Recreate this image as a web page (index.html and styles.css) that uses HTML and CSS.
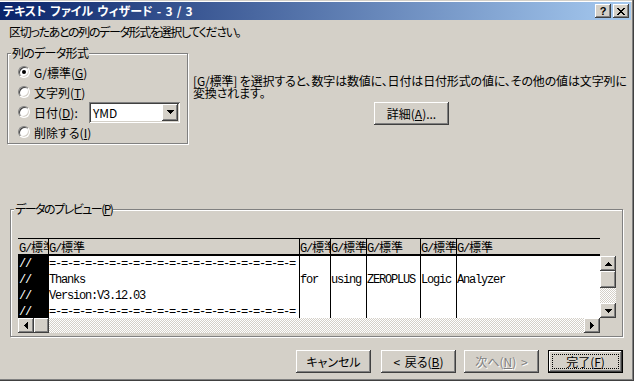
FILE: index.html
```
<!DOCTYPE html>
<html lang="ja">
<head>
<meta charset="utf-8">
<title>テキスト ファイル ウィザード - 3 / 3</title>
<link rel="stylesheet" href="styles.css">
</head>
<body>
<div class="window">
  <div class="titlebar">
    <span class="title">テキスト ファイル ウィザード - 3 / 3</span>
    <div class="tbtns">
      <span class="tbtn help">?</span>
      <span class="tbtn"><svg width="8" height="7" viewBox="0 0 8 7" shape-rendering="crispEdges"><path d="M0 0h2v1H0z M6 0h2v1H6z M1 1h2v1H1z M5 1h2v1H5z M2 2h4v1H2z M3 3h2v1H3z M2 4h4v1H2z M1 5h2v1H1z M5 5h2v1H5z M0 6h2v1H0z M6 6h2v1H6z"/></svg></span>
    </div>
  </div>
  <div class="body">
    <p class="intro">区切ったあとの列のデータ形式を選択してください。</p>
    <div class="top">
      <div class="group fmt">
        <span class="legend lg1">列のデータ形式</span>
        <div class="radios">
          <div class="radio"><span class="rb on"></span><span>G/標準(<u>G</u>)</span></div>
          <div class="radio"><span class="rb"></span><span>文字列(<u>T</u>)</span></div>
          <div class="radio"><span class="rb"></span><span class="dlbl">日付(<u>D</u>):</span><span class="combo"><span class="cval">YMD</span><span class="cbtn"><svg width="7" height="4" viewBox="0 0 7 4" shape-rendering="crispEdges"><path d="M0 0h7v1H6v1H5v1H4v1H3V3H2V2H1V1H0z"/></svg></span></span></div>
          <div class="radio"><span class="rb"></span><span>削除する(<u>I</u>)</span></div>
        </div>
      </div>
      <div class="desc">
        <p>[G/標準] を選択すると、数字は数値に、日付は日付形式の値に、その他の値は文字列に<br>変換されます。</p>
        <button class="btn detail">詳細(<u>A</u>)...</button>
      </div>
    </div>
    <div class="group preview">
      <span class="legend lg2">データのプレビュー(<u>P</u>)</span>
      <div class="grid">
        <div class="head cols mono">
          <div class="hc">G/<span class="k">標準</span></div>
          <div class="hc">G/<span class="k">標準</span></div>
          <div class="hc">G/<span class="k">標準</span></div>
          <div class="hc">G/<span class="k">標準</span></div>
          <div class="hc">G/<span class="k">標準</span></div>
          <div class="hc">G/<span class="k">標準</span></div>
          <div class="hc">G/<span class="k">標準</span></div>
        </div>
        <div class="hblank"></div>
        <div class="data cols mono">
          <div class="dc sel">//
//
//
//</div>
          <div class="dc">=-=-=-=-=-=-=-=-=-=-=-=-=-=-=-=-=-=-=-=-=
Thanks
Version:V3.12.03
=-=-=-=-=-=-=-=-=-=-=-=-=-=-=-=-=-=-=-=-=</div>
          <div class="dc">
for</div>
          <div class="dc">
using</div>
          <div class="dc">
ZEROPLUS</div>
          <div class="dc">
Logic</div>
          <div class="dc">
Analyzer</div>
        </div>
        <div class="vscroll">
          <span class="sbtn"><svg width="7" height="4" viewBox="0 0 7 4" shape-rendering="crispEdges"><path d="M3 0h1v1h1v1h1v1h1v1H0V3h1V2h1V1h1z"/></svg></span>
          <span class="thumb vthumb"></span>
          <span class="track"></span>
          <span class="sbtn"><svg width="7" height="4" viewBox="0 0 7 4" shape-rendering="crispEdges"><path d="M0 0h7v1H6v1H5v1H4v1H3V3H2V2H1V1H0z"/></svg></span>
        </div>
        <div class="hscroll">
          <span class="sbtn"><svg width="4" height="7" viewBox="0 0 4 7" shape-rendering="crispEdges"><path d="M3 0h1v7H3V6H2V5H1V4H0V3h1V2h1V1h1z"/></svg></span>
          <span class="thumb hthumb"></span>
          <span class="track"></span>
          <span class="sbtn"><svg width="4" height="7" viewBox="0 0 4 7" shape-rendering="crispEdges"><path d="M0 0h1v1h1v1h1v1h1v1H3v1H2v1H1v1H0z"/></svg></span>
        </div>
        <div class="corner"></div>
      </div>
    </div>
    <div class="buttons">
      <button class="btn cancel">キャンセル</button>
      <button class="btn back">&lt; 戻る(<u>B</u>)</button>
      <button class="btn next" disabled>次へ(<u>N</u>) &gt;</button>
      <button class="btn finish">完了(<u>F</u>)</button>
    </div>
  </div>
</div>
</body>
</html>
```

FILE: styles.css
```
* { box-sizing: border-box; }
html, body { margin: 0; padding: 0; }
body {
  width: 634px; height: 381px; overflow: hidden;
  background: #d4d0c8;
  font-family: "Noto Sans CJK JP", "Noto Sans CJK SC", sans-serif;
  font-size: 12px; color: #000;
  font-feature-settings: "palt" 1;
}
u { text-decoration: underline; text-underline-offset: 1px; }

.window {
  width: 634px; height: 381px;
  padding: 2px 3px 3px 0;
  display: flex; flex-direction: column;
  box-shadow: inset -1px -1px #404040, inset -2px -2px #808080, inset 0 1px #d4d0c8, inset 0 2px #fff;
}

.titlebar {
  flex: none; height: 18px;
  display: flex; align-items: center; justify-content: space-between;
  padding: 0 2px 0 3px;
  background: linear-gradient(to right, #0a246a, #a6caf0);
}
.title { color: #fff; font-weight: 700; line-height: 14px; white-space: nowrap; word-spacing: 1.5px; }
.tbtns { display: flex; gap: 2px; }
.tbtn {
  width: 16px; height: 14px;
  display: flex; align-items: center; justify-content: center;
  background: #d4d0c8;
  box-shadow: inset -1px -1px #404040, inset 1px 1px #fff, inset -2px -2px #808080;
}
.help { font-family: "Liberation Sans", sans-serif; font-weight: 700; font-size: 11px; line-height: 14px; }

.body { flex: 1; min-height: 0; display: flex; flex-direction: column; }
.intro { margin: 5px 0 0 9px; line-height: 14px; white-space: nowrap; letter-spacing: -1.35px; }

.top { flex: none; display: flex; height: 99px; margin-top: 7px; }

.group {
  flex: none;
  border: 1px solid #808080;
  box-shadow: 1px 1px 0 #fff, inset 1px 1px 0 #fff;
  display: flex; flex-direction: column;
}
.legend {
  align-self: flex-start;
  background: #d4d0c8;
  line-height: 14px;
  padding: 0 1px;
  margin: -8px 0 0 3px;
  white-space: nowrap;
}
.lg1 { letter-spacing: -0.7px; }
.lg2 { letter-spacing: -1.5px; }

.fmt { width: 181px; height: 91px; margin: 7px 0 0 7px; }
.radios { display: flex; flex-direction: column; margin-top: 2px; padding-left: 10px; }
.radio { height: 20px; display: flex; align-items: center; gap: 4px; white-space: nowrap; }
.rb {
  flex: none; position: relative;
  width: 12px; height: 12px; border-radius: 50%;
  background: #fff;
  border: 1px solid; border-color: #808080 #fff #fff #808080;
  box-shadow: inset 1px 1px #404040, inset -1px -1px #d4d0c8;
}
.rb.on::after {
  content: ""; position: absolute; left: 3px; top: 3px;
  width: 4px; height: 4px; border-radius: 50%; background: #000;
}
.dlbl { width: 51px; }
.combo {
  flex: none;
  display: flex; justify-content: space-between; align-items: center;
  width: 91px; height: 21px; padding: 2px;
  background: #fff;
  box-shadow: inset 1px 1px #808080, inset -1px -1px #fff, inset 2px 2px #404040, inset -2px -2px #d4d0c8;
}
.cval { padding-left: 2px; line-height: 17px; }
.cbtn, .sbtn, .thumb {
  flex: none;
  display: flex; align-items: center; justify-content: center;
  background: #d4d0c8;
  box-shadow: inset -1px -1px #404040, inset 1px 1px #fff, inset -2px -2px #808080;
}
.cbtn { width: 16px; height: 17px; }

.desc { display: flex; flex-direction: column; align-items: flex-start; margin-left: 5px; padding-top: 29px; }
.desc p { margin: 0; line-height: 12px; white-space: nowrap; letter-spacing: -0.15px; }
.detail { margin: 3px 0 0 181px; }

.btn {
  flex: none; position: relative;
  width: 75px; height: 23px; padding: 0; border: 0;
  background: #d4d0c8;
  font: inherit; font-feature-settings: "palt" 1; color: #000;
  line-height: 14px; word-spacing: 2px;
  display: flex; align-items: center; justify-content: center;
  box-shadow: inset -1px -1px #404040, inset 1px 1px #fff, inset -2px -2px #808080;
}
.btn:disabled { color: #808080; text-shadow: 1px 1px #fff; }

.preview { width: 613px; height: 128px; margin: 64px 0 0 10px; }
.grid {
  display: grid;
  grid-template-columns: 582px 16px;
  grid-template-rows: 18px 62px 15px;
  width: 598px;
  margin: 22px 0 0 7px;
}
.cols { display: grid; grid-template-columns: 30px 251px 31px 36px 54px 36px 144px; }
.mono {
  font-family: "Liberation Mono", monospace;
  font-size: 12px; letter-spacing: -1.2px;
  font-feature-settings: normal;
}
.k { font-family: "Noto Sans CJK JP", sans-serif; letter-spacing: 0; }
.head { border-top: 1px solid #000; border-bottom: 2px solid #000; background: #d4d0c8; }
.hc { line-height: 15px; overflow: hidden; white-space: nowrap; padding-left: 1px; }
.hc + .hc { border-left: 1px solid #000; padding-left: 0; }
.data { background: #fff; overflow: hidden; }
.dc { white-space: pre; line-height: 16px; overflow: hidden; padding-left: 1px; }
.dc + .dc { border-left: 1px solid #000; padding-left: 0; }
.dc.sel { background: #000; color: #fff; }

.vscroll { display: flex; flex-direction: column; }
.vscroll .sbtn { width: 16px; height: 15px; }
.vthumb { width: 16px; height: 17px; }
.track { flex: 1; background: repeating-conic-gradient(#fff 0 25%, #d4d0c8 0 50%) 0 0 / 2px 2px; }
.hscroll { display: flex; }
.hscroll .sbtn { width: 16px; height: 15px; }
.hthumb { width: 15px; height: 15px; }

.buttons { flex: none; display: flex; justify-content: flex-end; margin: 13px 8px 0 0; }
.back { margin-left: 10px; }
.next { margin-left: 8px; }
.finish { margin-left: 9px; border: 1px solid #000; }
.finish::after { content: ""; position: absolute; inset: 3px; border: 1px dotted #000; }
```
